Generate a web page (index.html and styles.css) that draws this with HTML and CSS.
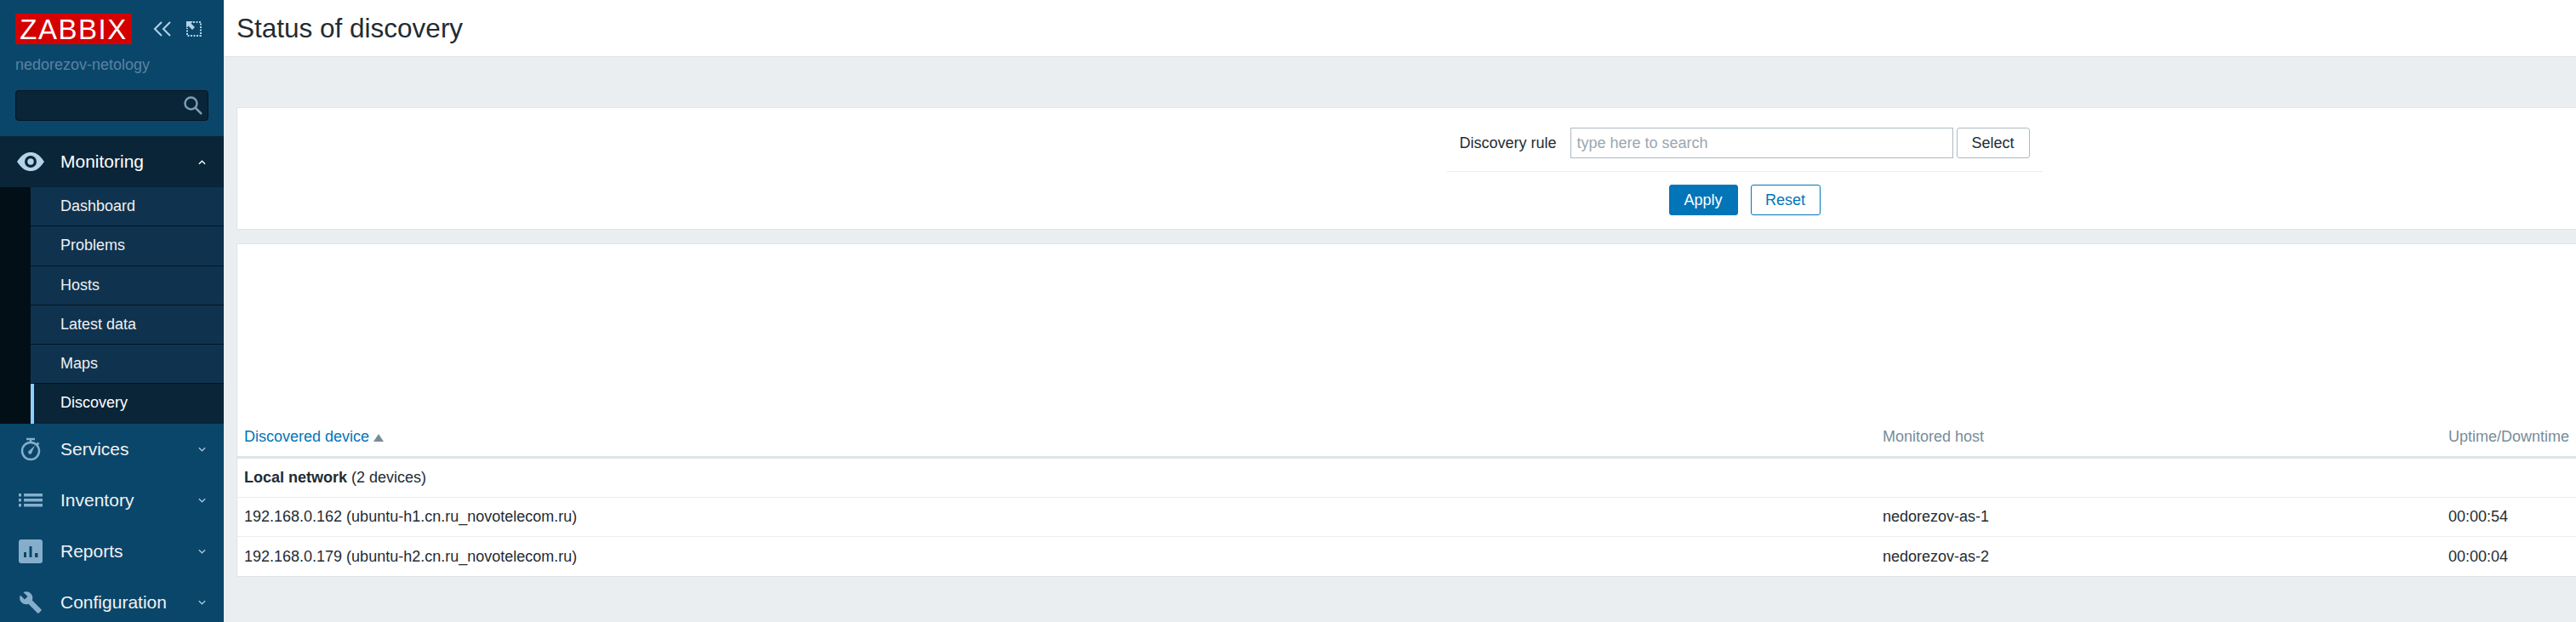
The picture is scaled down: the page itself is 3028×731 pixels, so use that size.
FILE: index.html
```html
<!DOCTYPE html>
<html lang="en">

<head>
  <meta charset="UTF-8" />
  <meta name="viewport" content="width=device-width, initial-scale=1" />
  <title>Status of discovery</title>
  <link rel="stylesheet" href="styles.css">
</head>

<body>
  <nav class="sidebar">
    <div class="brand">
      <div class="brand-top">
        <span class="logo">ZABBIX</span>
        <svg class="collapse-icon" viewBox="0 0 22 18"><path d="M10 1 2 9l8 8M20 1l-8 8 8 8" /></svg>
        <svg class="kiosk-icon" viewBox="0 0 18 18">
          <path class="dots" d="M8 1h9v16H1V8" />
          <path class="arrow" d="M0 0h8L5.500 2.500 10 7 7 10 2.500 5.500 0 8z" />
        </svg>
      </div>
      <div class="server-name">nedorezov-netology</div>
      <div class="search-box">
        <svg class="search-icon" viewBox="0 0 22 22"><circle cx="8.500" cy="8.500" r="7" /><path d="m13.500 13.500 7.500 7.500" /></svg>
      </div>
    </div>

    <div class="menu-item menu-open">
      <svg class="menu-icon" viewBox="0 0 32 24">
        <path class="eye" d="M0 12C6 3 11 1 16 1s10 2 16 11c-6 9-11 11-16 11S6 21 0 12z" />
        <circle class="eye-ring" cx="16" cy="12" r="7" />
        <circle class="eye" cx="16" cy="12" r="3.700" />
      </svg>
      <span class="menu-label">Monitoring</span>
      <svg class="chevron" viewBox="0 0 10 6"><path d="m1 5 4-4 4 4" /></svg>
    </div>
    <ul class="submenu">
      <li>Dashboard</li>
      <li>Problems</li>
      <li>Hosts</li>
      <li>Latest data</li>
      <li>Maps</li>
      <li class="selected">Discovery</li>
    </ul>

    <div class="menu-item">
      <svg class="menu-icon" viewBox="0 0 28 28">
        <circle class="line" cx="14" cy="16" r="10" />
        <path class="line" d="M9 2h10M14 2v4M21.500 6.500l2 2" />
        <path class="fill" d="m19 9.500-3.500 8a2.200 2.200 0 1 1-3-2z" />
      </svg>
      <span class="menu-label">Services</span>
      <svg class="chevron" viewBox="0 0 10 6"><path d="m1 1 4 4 4-4" /></svg>
    </div>
    <div class="menu-item">
      <svg class="menu-icon" viewBox="0 0 28 16">
        <path class="fill" d="M0 0h3v3.500H0zM6 0h22v3.500H6zM0 6h3v3.500H0zM6 6h22v3.500H6zM0 12h3v3.500H0zM6 12h22v3.500H6z" />
      </svg>
      <span class="menu-label">Inventory</span>
      <svg class="chevron" viewBox="0 0 10 6"><path d="m1 1 4 4 4-4" /></svg>
    </div>
    <div class="menu-item">
      <svg class="menu-icon" viewBox="0 0 28 28">
        <rect class="fill" width="28" height="28" rx="3" />
        <path class="bars" d="M6 15h3v6H6zM12.500 8h3v13h-3zM19 16h3.500v5H19z" />
      </svg>
      <span class="menu-label">Reports</span>
      <svg class="chevron" viewBox="0 0 10 6"><path d="m1 1 4 4 4-4" /></svg>
    </div>
    <div class="menu-item">
      <svg class="menu-icon" viewBox="0 0 24 24">
        <path class="fill" d="M22.700 19l-9.100-9.100c.9-2.300.4-5-1.500-6.900-2-2-5-2.400-7.400-1.300L9 6 6 9 1.600 4.700C.4 7.100.9 10.100 2.900 12.100c1.900 1.900 4.600 2.400 6.900 1.500l9.100 9.100c.4.4 1 .4 1.400 0l2.300-2.300c.5-.4.5-1.100.1-1.400z" />
      </svg>
      <span class="menu-label">Configuration</span>
      <svg class="chevron" viewBox="0 0 10 6"><path d="m1 1 4 4 4-4" /></svg>
    </div>
  </nav>

  <main class="main">
    <header class="page-header">
      <h1>Status of discovery</h1>
    </header>

    <div class="content">
      <section class="card filter">
        <div class="filter-row">
          <label class="filter-label">Discovery rule</label>
          <input class="filter-input" type="text" placeholder="type here to search" />
          <button class="btn-alt">Select</button>
        </div>
        <div class="filter-buttons">
          <button class="btn-main">Apply</button>
          <button class="btn-reset">Reset</button>
        </div>
      </section>

      <section class="card list">
        <table class="list-table">
          <thead>
            <tr>
              <th class="col-device"><a class="sort-link">Discovered device</a><span class="sort-arrow"></span></th>
              <th class="col-host">Monitored host</th>
              <th>Uptime/Downtime</th>
            </tr>
          </thead>
          <tbody>
            <tr>
              <td colspan="3"><b>Local network</b> (2 devices)</td>
            </tr>
            <tr>
              <td>192.168.0.162 (ubuntu-h1.cn.ru_novotelecom.ru)</td>
              <td>nedorezov-as-1</td>
              <td>00:00:54</td>
            </tr>
            <tr>
              <td>192.168.0.179 (ubuntu-h2.cn.ru_novotelecom.ru)</td>
              <td>nedorezov-as-2</td>
              <td>00:00:04</td>
            </tr>
          </tbody>
        </table>
      </section>
    </div>
  </main>
</body>

</html>
```
FILE: styles.css
```css
html,
body {
  height: 100%;
}

body {
  margin: 0;
  display: flex;
  overflow: hidden;
  background-color: #ebeef0;
  color: #1f2c33;
  font-family: "Liberation Sans", Arial, sans-serif;
  font-size: 18px;
}

/* Sidebar */
.sidebar {
  flex: 0 0 263px;
  width: 263px;
  height: 731px;
  overflow: hidden;
  background-color: #0a466a;
}

.brand {
  height: 160px;
  box-sizing: border-box;
  padding: 16px 18px 0;
}

.brand-top {
  display: flex;
  align-items: center;
  height: 36px;
}

.logo {
  width: 137px;
  height: 36px;
  line-height: 37px;
  text-align: center;
  background-color: #d40000;
  color: #fff;
  font-size: 33px;
  letter-spacing: 1.500px;
}

.collapse-icon {
  width: 22px;
  height: 18px;
  margin-left: 25px;
  fill: none;
  stroke: #b4d3e8;
  stroke-width: 2;
}

.kiosk-icon {
  width: 18px;
  height: 18px;
  margin-left: 17px;
}

.kiosk-icon .dots {
  fill: none;
  stroke: #b4d3e8;
  stroke-width: 2;
  stroke-dasharray: 2 1.500;
}

.kiosk-icon .arrow {
  fill: #b4d3e8;
}

.server-name {
  margin-top: 12px;
  color: #5b83a1;
  line-height: 24px;
}

.search-box {
  position: relative;
  width: 227px;
  height: 36px;
  margin-top: 18px;
  box-sizing: border-box;
  background-color: #0a2538;
  border: 1px solid #04141f;
  border-radius: 4px;
}

.search-icon {
  position: absolute;
  right: 6px;
  top: 6px;
  width: 22px;
  height: 22px;
  fill: none;
  stroke: #7c9db3;
  stroke-width: 2.500;
}

.menu-item {
  display: flex;
  align-items: center;
  height: 60px;
  color: #f2f2f2;
  font-size: 21px;
  position: relative;
}

.menu-open {
  background-color: #0a2538;
  color: #fff;
}

.menu-label {
  position: absolute;
  left: 71px;
}

.menu-icon {
  width: 28px;
  height: 28px;
  margin-left: 22px;
}

.menu-open .menu-icon {
  width: 32px;
  height: 24px;
  margin-left: 20px;
}

.menu-icon .fill {
  fill: #86aecb;
}

.menu-icon .line {
  fill: none;
  stroke: #86aecb;
  stroke-width: 2.500;
}

.menu-icon .bars {
  fill: #0a466a;
}

.menu-icon .eye {
  fill: #b4d3e8;
}

.menu-icon .eye-ring {
  fill: #0a2538;
}

.chevron {
  position: absolute;
  left: 233px;
  top: 27px;
  width: 9px;
  height: 6px;
  fill: none;
  stroke: #a9c6dc;
  stroke-width: 1.500;
}

.menu-open .chevron {
  stroke: #fff;
  top: 28px;
}

.submenu {
  list-style: none;
  margin: 0;
  padding: 0 0 0 36px;
  background-color: #020f17;
}

.submenu li {
  height: 46.250px;
  box-sizing: border-box;
  padding-left: 35px;
  line-height: 45px;
  background-color: #0f334f;
  border-bottom: 1.500px solid #05141f;
  color: #f0f0f0;
}

.submenu li.selected {
  background-color: #0a2538;
  border-left: 4px solid #8cd0ff;
  border-bottom: none;
  padding-left: 31px;
  color: #fff;
}

/* Main area */
.main {
  flex: 1;
  min-width: 0;
}

.page-header {
  height: 67px;
  box-sizing: border-box;
  padding-left: 15px;
  background-color: #fff;
  border-bottom: 1px solid #dfe4e7;
}

.page-header h1 {
  margin: 0;
  font-size: 31.500px;
  font-weight: normal;
  line-height: 66px;
}

.content {
  width: 3544px;
  margin-left: 15px;
  padding-top: 59px;
}

.card {
  box-sizing: border-box;
  background-color: #fff;
  border: 1px solid #dfe4e7;
  border-right: none;
}

.filter {
  height: 144px;
  margin-bottom: 16px;
  padding-top: 23px;
}

.filter-row {
  display: flex;
  justify-content: center;
  align-items: center;
  width: 701px;
  height: 52px;
  margin: 0 auto;
  padding-bottom: 15px;
  box-sizing: border-box;
  border-bottom: 1px solid #ebeef0;
}

.filter-label {
  margin-right: 16px;
}

.filter-input {
  width: 450px;
  height: 36px;
  box-sizing: border-box;
  padding: 0 7px;
  border: 1px solid #acbbc2;
  font-family: inherit;
  font-size: 18px;
  color: #1f2c33;
}

.filter-input::placeholder {
  color: #9aa7ad;
  opacity: 1;
}

button {
  height: 36px;
  box-sizing: border-box;
  border-radius: 3px;
  padding: 0;
  font-family: inherit;
  font-size: 18px;
}

.btn-alt {
  width: 86px;
  margin-left: 4px;
  background-color: #fff;
  border: 1px solid #acbbc2;
  color: #1f2c33;
}

.filter-buttons {
  display: flex;
  justify-content: center;
  gap: 15px;
  margin-top: 15px;
}

.btn-main {
  width: 81px;
  background-color: #0275b8;
  border: 1px solid #0275b8;
  color: #fff;
}

.btn-reset {
  width: 82px;
  background-color: #fff;
  border: 1px solid #0275b8;
  color: #0275b8;
}

.list {
  padding-top: 203px;
}

.list-table {
  width: 100%;
  table-layout: fixed;
  border-collapse: separate;
  border-spacing: 0;
}

.col-device {
  width: 1926px;
}

.col-host {
  width: 665px;
}

.list-table th {
  height: 49px;
  box-sizing: border-box;
  padding: 0 8px;
  text-align: left;
  font-weight: normal;
  color: #768d99;
  border-bottom: 3px solid #dfe4e7;
}

.list-table td {
  height: 46px;
  box-sizing: border-box;
  padding: 0 8px;
  border-bottom: 1px solid #ebeef0;
}

.list-table tr:last-child td {
  border-bottom: none;
}

.sort-link {
  color: #0275b8;
}

.sort-arrow {
  display: inline-block;
  margin-left: 5px;
  border-left: 6px solid transparent;
  border-right: 6px solid transparent;
  border-bottom: 9px solid #768d99;
}
```
